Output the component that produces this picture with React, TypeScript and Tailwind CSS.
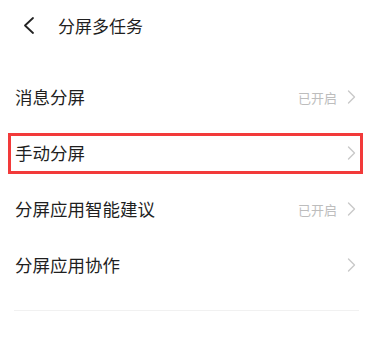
import React from "react";

type Row = { label: string; status?: string; highlight?: boolean };

const ROWS: Row[] = [
  { label: "消息分屏", status: "已开启" },
  { label: "手动分屏", highlight: true },
  { label: "分屏应用智能建议", status: "已开启" },
  { label: "分屏应用协作" },
];

function Chevron() {
  return (
    <svg width="9" height="14" viewBox="0 0 9 14" fill="none" className="shrink-0">
      <polyline
        points="1.5,1 7.5,7 1.5,13"
        stroke="#c9c9c9"
        strokeWidth="1.4"
        strokeLinecap="round"
        strokeLinejoin="round"
      />
    </svg>
  );
}

export default function App() {
  return (
    <div
      className="h-[342px] w-[373px] overflow-hidden bg-white text-[#1f1f1f]"
      style={{ fontFamily: '"Noto Sans CJK SC", "Noto Sans", sans-serif' }}
    >
      <header className="flex h-[50px] items-center pl-[23px]">
        <svg width="12" height="17" viewBox="0 0 12 17" fill="none">
          <polyline
            points="10,1 2,8.5 10,16"
            stroke="#222"
            strokeWidth="1.8"
            strokeLinecap="round"
            strokeLinejoin="round"
          />
        </svg>
        <h1 className="ml-[23px] text-[17px] leading-none">分屏多任务</h1>
      </header>

      <div className="mt-[19px] flex flex-col">
        {ROWS.map((row) => (
          <div key={row.label} className="relative flex h-[56px] items-center pl-[15px] pr-[17px]">
            <span className="flex-1 text-[17.5px] leading-none">{row.label}</span>
            {row.status && (
              <span className="mr-[10px] text-[13px] leading-none text-[#bdbdbd]">{row.status}</span>
            )}
            <Chevron />
            {row.highlight && (
              <div className="pointer-events-none absolute left-[8px] top-[8px] h-[41px] w-[355px] border-[3px] border-[#f23a3a]" />
            )}
          </div>
        ))}
      </div>

      <div className="mx-[14px] mt-[17px] h-px bg-[#f1f1f1]" />
    </div>
  );
}
